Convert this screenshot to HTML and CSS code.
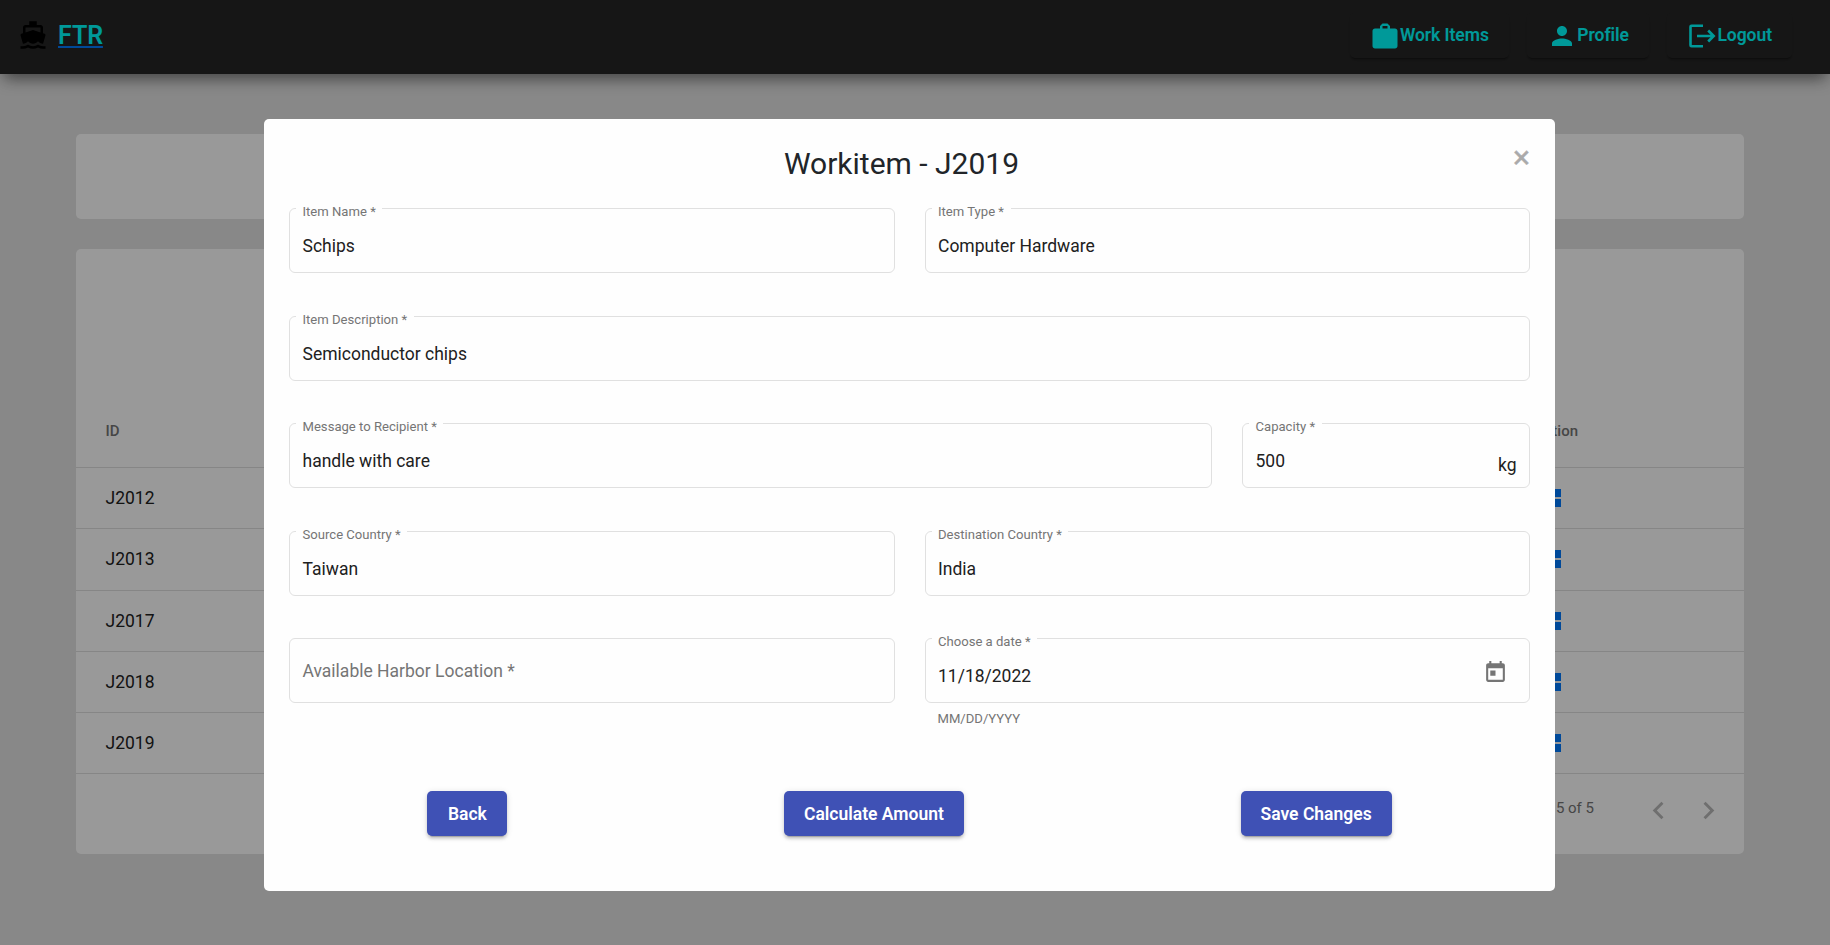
FILE: index.html
```html
<!DOCTYPE html>
<html lang="en">
<head>
<meta charset="utf-8">
<title>FTR</title>
<link rel="stylesheet" href="styles.css">
</head>
<body>
<header class="topbar">
  <svg class="boat" viewBox="0 0 24 24"><path d="M20 21c-1.39 0-2.78-.47-4-1.32-2.44 1.71-5.56 1.71-8 0C6.780 20.530 5.390 21 4 21H2v2h2c1.380 0 2.740-.35 4-.99 2.520 1.290 5.480 1.290 8 0 1.260.65 2.620.99 4 .99h2v-2h-2zM3.950 19H4c1.600 0 3.020-.88 4-2 .98 1.120 2.400 2 4 2s3.020-.88 4-2c.98 1.120 2.400 2 4 2h.05l1.890-6.680c.08-.26.06-.54-.06-.78s-.34-.42-.6-.5L20 10.620V6c0-1.100-.9-2-2-2h-3V1H9v3H6c-1.100 0-2 .9-2 2v4.620l-1.290.42c-.26.08-.48.26-.6.5s-.15.52-.06.78L3.950 19zM6 6h12v3.970L12 8 6 9.970V6z"/></svg>
  <a class="brand">FTR</a>
  <nav class="nav">
    <button class="navbtn"><svg class="nav-ic work" viewBox="0 0 24 24"><path d="M20 6h-4V4l-2-2h-4L8 4v2H4c-1.100 0-2 .9-2 2v12c0 1.100.9 2 2 2h16c1.100 0 2-.9 2-2V8c0-1.100-.9-2-2-2zM14 6h-4V4h4z"/></svg>Work Items</button>
    <button class="navbtn"><svg class="nav-ic person" viewBox="0 0 24 24"><path d="M12 12c2.210 0 4-1.790 4-4s-1.790-4-4-4-4 1.790-4 4 1.790 4 4 4zm0 2c-2.670 0-8 1.340-8 4v2h16v-2c0-2.660-5.330-4-8-4z"/></svg>Profile</button>
    <button class="navbtn"><svg class="nav-ic" viewBox="0 0 30 30"><path d="M16 5.700H4.500a1 1 0 0 0-1 1v18.600a1 1 0 0 0 1 1H16M10 16h17M21.200 10.500l5.500 5.500-5.500 5.500" fill="none" stroke="currentColor" stroke-width="2.600"/></svg>Logout</button>
  </nav>
</header>
<main class="page">
  <section class="card search"></section>
  <section class="card list">
    <div class="row head"><span>ID</span><span class="act">Action</span></div>
    <div class="row"><span>J2012</span><svg class="mod" viewBox="0 0 27 18"><path d="M0 0h8v8H0zM9.500 0h8v8h-8zM19 0h8v8h-8zM0 10h8v8H0zM9.500 10h8v8h-8zM19 10h8v8h-8z"/></svg></div>
    <div class="row"><span>J2013</span><svg class="mod" viewBox="0 0 27 18"><path d="M0 0h8v8H0zM9.500 0h8v8h-8zM19 0h8v8h-8zM0 10h8v8H0zM9.500 10h8v8h-8zM19 10h8v8h-8z"/></svg></div>
    <div class="row"><span>J2017</span><svg class="mod" viewBox="0 0 27 18"><path d="M0 0h8v8H0zM9.500 0h8v8h-8zM19 0h8v8h-8zM0 10h8v8H0zM9.500 10h8v8h-8zM19 10h8v8h-8z"/></svg></div>
    <div class="row"><span>J2018</span><svg class="mod" viewBox="0 0 27 18"><path d="M0 0h8v8H0zM9.500 0h8v8h-8zM19 0h8v8h-8zM0 10h8v8H0zM9.500 10h8v8h-8zM19 10h8v8h-8z"/></svg></div>
    <div class="row"><span>J2019</span><svg class="mod" viewBox="0 0 27 18"><path d="M0 0h8v8H0zM9.500 0h8v8h-8zM19 0h8v8h-8zM0 10h8v8H0zM9.500 10h8v8h-8zM19 10h8v8h-8z"/></svg></div>
    <div class="pager"><span class="range">1 – 5 of 5</span>
      <svg class="chev" viewBox="0 0 24 24"><path d="M15.410 7.410L14 6l-6 6 6 6 1.410-1.410L10.830 12z"/></svg>
      <svg class="chev" viewBox="0 0 24 24"><path d="M10 6L8.590 7.410 13.170 12l-4.580 4.590L10 18l6-6z"/></svg>
    </div>
  </section>
</main>
<div class="overlay">
  <div class="dialog">
    <span class="close">×</span>
    <h1 class="title">Workitem - J2019</h1>
    <form class="form">
      <fieldset class="field"><legend>Item Name *</legend><span class="value">Schips</span></fieldset>
      <fieldset class="field"><legend>Item Type *</legend><span class="value">Computer Hardware</span></fieldset>
      <fieldset class="field full"><legend>Item Description *</legend><span class="value">Semiconductor chips</span></fieldset>
      <div class="split full">
        <fieldset class="field"><legend>Message to Recipient *</legend><span class="value">handle with care</span></fieldset>
        <fieldset class="field"><legend>Capacity *</legend><span class="value">500</span><span class="suffix">kg</span></fieldset>
      </div>
      <fieldset class="field"><legend>Source Country *</legend><span class="value">Taiwan</span></fieldset>
      <fieldset class="field"><legend>Destination Country *</legend><span class="value">India</span></fieldset>
      <fieldset class="field empty"><span class="placeholder">Available Harbor Location *</span></fieldset>
      <div class="date">
        <fieldset class="field"><legend>Choose a date *</legend><span class="value">11/18/2022</span><svg class="cal" viewBox="0 0 24 24"><path d="M19 3h-1V1h-2v2H8V1H6v2H5c-1.110 0-1.990.9-1.990 2L3 19c0 1.100.89 2 2 2h14c1.100 0 2-.9 2-2V5c0-1.100-.9-2-2-2zm0 16H5V8h14v11zM7 10h5v5H7z"/></svg></fieldset>
        <div class="hint">MM/DD/YYYY</div>
      </div>
    </form>
    <div class="actions">
      <button class="btn">Back</button>
      <button class="btn">Calculate Amount</button>
      <button class="btn">Save Changes</button>
    </div>
  </div>
</div>
</body>
</html>
```
FILE: styles.css
```css
* { box-sizing: border-box; }
body {
  margin: 0;
  width: 1830px;
  height: 945px;
  overflow: hidden;
  background: #e3e3e3;
  font-family: Roboto, "Liberation Sans", sans-serif;
  color: #212121;
}
.topbar {
  position: relative;
  display: flex;
  align-items: center;
  height: 74px;
  padding: 0 38px 4px 18px;
  background: #262626;
  box-shadow: 0 10px 13px -6px rgba(0,0,0,.35), 0 6px 16px -1px rgba(0,0,0,.22);
}
.boat { width: 30px; height: 30px; fill: #000; }
.brand {
  margin: 1px 0 0 10px;
  font-size: 25px;
  font-weight: 600;
  letter-spacing: -.1px;
  line-height: 30px;
  color: #00ffff;
  text-decoration: underline;
  text-decoration-color: #007bff;
}
.nav { display: flex; margin-left: auto; gap: 18.500px; }
.navbtn {
  display: flex;
  align-items: center;
  height: 45px;
  padding: 0 20px;
  border: 0;
  border-radius: 5px;
  background: #262626;
  color: #00ffff;
  font: 600 17.5px Roboto, sans-serif;
  letter-spacing: -.05px;
  box-shadow: 0 3px 2px -2px rgba(0,0,0,.3), 0 2px 3px rgba(0,0,0,.2);
}
.nav-ic { width: 30px; height: 30px; fill: currentColor; }
.work { margin-top: 1px; }
.person { margin-top: 2px; }
.page { padding: 60px 86px 0 76px; }
.card { background: #fff; border-radius: 5px; }
.search { height: 85px; }
.list { height: 605px; margin-top: 30px; padding-top: 148px; }
.row {
  display: flex;
  align-items: center;
  justify-content: space-between;
  height: 61.250px;
  padding: 0 183px 0 29.500px;
  border-bottom: 1px solid #e0e0e0;
  font-size: 17.5px;
}
.head { height: 71px; padding-right: 166px; padding-bottom: 3px; font-size: 15px; font-weight: 500; color: #757575; }
.mod { width: 27px; height: 18px; fill: #007bff; }
.pager { display: flex; align-items: center; justify-content: flex-end; gap: 15px; height: 72px; padding-right: 18px; font-size: 15px; color: #757575; }
.range { margin: 0 32px 5px 0; }
.chev { width: 35px; height: 35px; fill: #b9b9b9; }
.overlay {
  position: absolute;
  inset: 0;
  padding: 119px 275px 54px 264px;
  background: rgba(0,0,0,.4);
}
.dialog { position: relative; height: 772px; padding: 25px; border-radius: 5px; background: #fefefe; }
.close { position: absolute; right: 25px; top: 22px; font-size: 32px; line-height: 32px; font-weight: 400; color: #aaa; -webkit-text-stroke: .4px #aaa; }
.title { margin: 0 0 21px; padding-right: 16px; font-size: 30px; line-height: 39px; font-weight: 400; text-align: center; color: #212529; }
.form { display: grid; grid-template-columns: 1fr 1fr; column-gap: 30px; grid-auto-rows: 107.500px; }
.full { grid-column: span 2; }
.split { display: grid; grid-template-columns: 923px 1fr; column-gap: 30px; }
.field {
  display: flex;
  align-items: flex-start;
  min-width: 0;
  height: 75px;
  margin: -6px 0 0;
  padding: 0 12.500px;
  border: 1px solid #e0e0e0;
  border-radius: 6px;
}
/* The label sits slightly below the outline, so it is padded on top only. */
.field legend { margin-left: -6.500px; padding: 6px 6.500px 0; font-size: 13.100px; line-height: 15px; color: #757575; }
.value { padding-top: 15px; font-size: 17.5px; line-height: 24px; }
.suffix { margin-left: auto; padding-top: 19px; font-size: 17.5px; line-height: 24px; }
.empty { height: 65px; margin-top: 4px; }
.placeholder { padding-top: 20px; font-size: 17.5px; line-height: 24px; color: #757575; }
.cal { width: 25px; height: 25px; margin: 11px 9px 0 auto; fill: #757575; }
.hint { margin: 8px 0 0 13px; font-size: 13.100px; line-height: 15px; color: #757575; }
.actions { display: flex; justify-content: space-around; padding-top: 49.500px; }
.btn {
  min-width: 80px;
  height: 45px;
  padding: 0 20px;
  border: 0;
  border-radius: 5px;
  background: #3f51b5;
  color: #fff;
  font: 600 17.5px Roboto, sans-serif;
  box-shadow: 0 4px 1px -3px rgba(0,0,0,.2), 0 3px 3px rgba(0,0,0,.14), 0 1px 6px rgba(0,0,0,.12);
}
```
